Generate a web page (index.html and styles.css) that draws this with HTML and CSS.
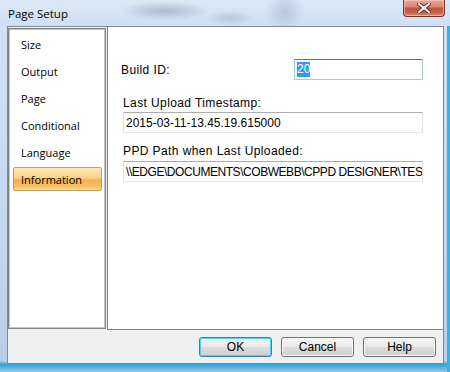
FILE: index.html
```html
<!DOCTYPE html>
<html lang="en">
<head>
    <meta charset="UTF-8">
    <title>Page Setup</title>
    <link rel="stylesheet" href="styles.css">
</head>
<body>
    <div class="titlebar">
        <span class="title">Page Setup</span>
        <div class="close-btn">
            <svg width="14" height="10" viewBox="0 0 14 10">
                <path d="M2 1 L12 9 M12 1 L2 9" stroke="#4a2a26" stroke-width="4" stroke-linecap="square"/>
                <path d="M2 1 L12 9 M12 1 L2 9" stroke="#f4f4f4" stroke-width="2.2" stroke-linecap="square"/>
            </svg>
        </div>
    </div>

    <div class="frame">
        <div class="panes">
            <div class="nav">
                <div class="nav-item">Size</div>
                <div class="nav-item">Output</div>
                <div class="nav-item">Page</div>
                <div class="nav-item">Conditional</div>
                <div class="nav-item">Language</div>
                <div class="nav-item active">Information</div>
            </div>
            <div class="content">
                <div class="build-row">
                    <span class="label">Build ID:</span>
                    <div class="textbox focused"><span class="selected">20</span></div>
                </div>
                <div class="label field-label">Last Upload Timestamp:</div>
                <div class="textbox">2015-03-11-13.45.19.615000</div>
                <div class="label field-label second">PPD Path when Last Uploaded:</div>
                <div class="textbox path">\\EDGE\DOCUMENTS\COBWEBB\CPPD DESIGNER\TEST</div>
            </div>
        </div>
        <div class="footer">
            <button class="btn default">OK</button>
            <button class="btn">Cancel</button>
            <button class="btn">Help</button>
        </div>
    </div>
</body>
</html>
```

FILE: styles.css
```css
body {
    margin: 0;
    width: 450px;
    height: 372px;
    overflow: hidden;
    background: linear-gradient(to bottom, #d3e3f4, #c3d8ee 60%, #b7cfe8 97%, #2aa6dc 98%, #9fc3e6);
    font-family: "Liberation Sans", Arial, sans-serif;
    box-shadow: inset -3px 0 0 #3cb0e0, inset -2px 0 0 #9fd0ec;
}
.titlebar {
    height: 26px;
    display: flex;
    align-items: center;
    padding: 0 5px 0 8px;
    background:
        radial-gradient(ellipse 45px 10px at 165px 11px, rgba(120, 140, 165, 0.45), transparent),
        radial-gradient(ellipse 25px 8px at 230px 18px, rgba(120, 140, 165, 0.3), transparent),
        radial-gradient(ellipse 20px 22px at 285px 12px, rgba(140, 160, 190, 0.4), transparent),
        linear-gradient(to bottom, #dbe8f6, #cfe0f3);
}
.title {
    font-family: "Open Sans", sans-serif;
    font-size: 11.5px;
    color: #000;
    margin-top: 1px;
}
.close-btn {
    margin-left: auto;
    align-self: flex-start;
    width: 42px;
    height: 17px;
    box-sizing: border-box;
    border: 1px solid #7a3127;
    border-top: none;
    border-radius: 0 0 4px 4px;
    background: linear-gradient(to bottom, #e6a898, #d58a78 40%, #c24e3a 55%, #cf6b55 85%, #e0927c);
    box-shadow: inset 0 0 0 1px rgba(255, 220, 210, 0.5);
    display: flex;
    align-items: center;
    justify-content: center;
}
.frame {
    margin: 0 6px 0 7px;
    height: 338px;
    box-sizing: border-box;
    border: 1px solid #7d8a99;
    background: #f0f0f0;
    display: flex;
    flex-direction: column;
}
.panes {
    height: 303px;
    display: flex;
    gap: 1px;
}
.nav {
    flex-shrink: 0;
    width: 98px;
    height: 301px;
    margin-top: 1px;
    box-sizing: border-box;
    border: 1px solid #7f8388;
    box-shadow: inset 0 0 0 1px #c4c6c9;
    background: #fff;
    padding: 3px 3px 0 4px;
    display: flex;
    flex-direction: column;
    gap: 3px;
}
.nav-item {
    height: 24px;
    box-sizing: border-box;
    padding-left: 7px;
    border: 1px solid transparent;
    display: flex;
    align-items: center;
    font-family: "Open Sans", sans-serif;
    font-size: 11px;
    color: #000;
}
.nav-item.active {
    border-color: #c59c5a;
    border-radius: 2px;
    background: linear-gradient(to bottom, #fde7b6, #fbd38a 45%, #f6b04c 55%, #f8c06a 85%, #fcd897);
}
.content {
    flex: 1;
    min-width: 0;
    background: #fff;
    border-left: 1px solid #7f8388;
    border-bottom: 1px solid #7f8388;
    padding: 32px 20px 0 15px;
}
.label {
    font-size: 12px;
    letter-spacing: 0.4px;
    color: #000;
}
.build-row {
    height: 21px;
    display: flex;
    align-items: center;
    justify-content: space-between;
}
.build-row .label {
    margin-left: -2px;
}
.build-row .textbox {
    width: 129px;
    height: 21px;
}
.field-label {
    margin-top: 16px;
    line-height: 14px;
    margin-bottom: 2px;
}
.field-label.second {
    margin-top: 11px;
    margin-bottom: 3px;
}
.textbox {
    height: 21px;
    box-sizing: border-box;
    border: 1px solid #e2e3ea;
    border-top-color: #abadb3;
    border-bottom-color: #e3e9ef;
    padding: 0 2px;
    display: flex;
    align-items: center;
    white-space: nowrap;
    overflow: hidden;
    font-size: 12px;
    color: #000;
    background: #fff;
}
.textbox.path {
    letter-spacing: -0.45px;
}
.textbox.focused {
    border-color: #a4c9e3;
    border-top-color: #3d7bad;
}
.selected {
    background: #3399ff;
    color: #fff;
    line-height: 15px;
}
.footer {
    flex: 1;
    display: flex;
    justify-content: flex-end;
    align-items: flex-start;
    gap: 9px;
    padding: 7px 7px 0 0;
}
.btn {
    width: 73px;
    height: 20px;
    box-sizing: border-box;
    border: 1px solid #707070;
    border-radius: 3px;
    background: linear-gradient(to bottom, #f2f2f2, #ebebeb 50%, #dddddd 50%, #cfcfcf);
    box-shadow: inset 0 0 0 1px #fcfcfc;
    font-family: "Liberation Sans", Arial, sans-serif;
    font-size: 12px;
    color: #000;
    padding: 0;
}
.btn.default {
    border-color: #3c7fb1;
    box-shadow: inset 0 0 0 1px #48d5fd;
}
```
